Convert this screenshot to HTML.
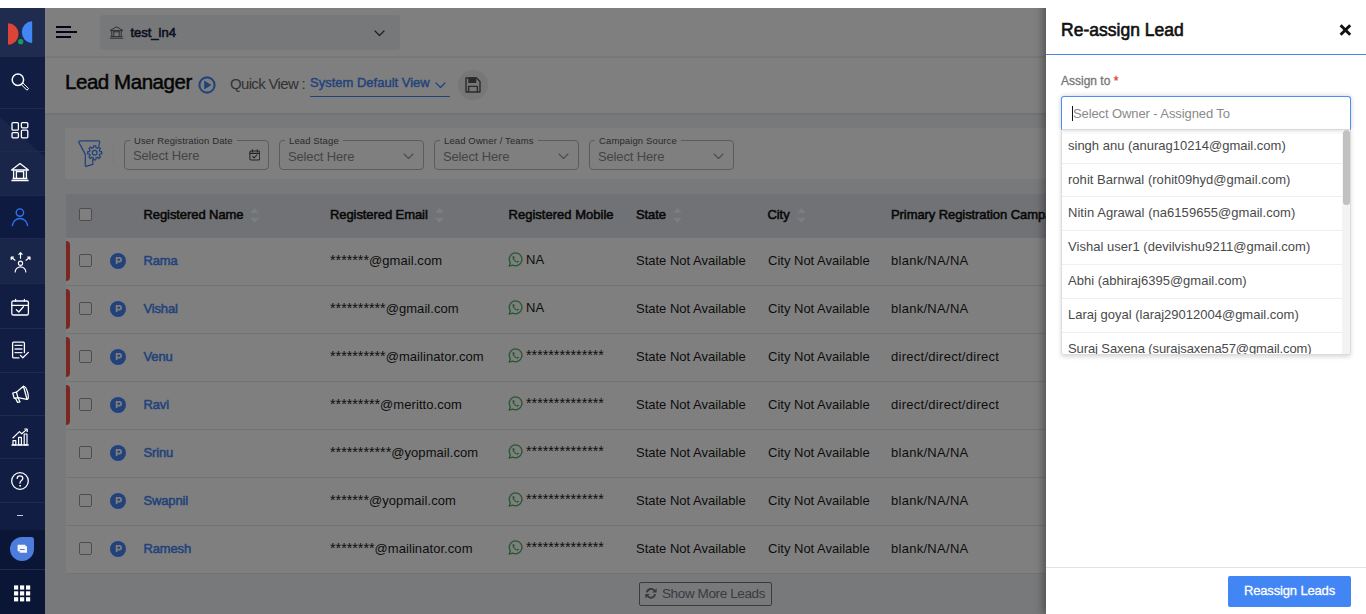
<!DOCTYPE html>
<html>
<head>
<meta charset="utf-8">
<title>Lead Manager</title>
<style>
*{box-sizing:border-box;margin:0;padding:0}
html,body{width:1366px;height:614px;overflow:hidden;background:#fff;font-family:"Liberation Sans",sans-serif;}
body{position:relative}
.abs{position:absolute}
/* ---------- sidebar ---------- */
#side{position:absolute;left:0;top:8px;width:45px;height:606px;background:#111d43;z-index:5;overflow:hidden}
#side .logo{position:absolute;left:0;top:0;width:45px;height:48px;background:#1f2c4f}
#side .sep{position:absolute;left:0;width:45px;height:1px;background:#1e2a50}
#side svg{position:absolute}
#side .act{position:absolute;left:0;top:187px;width:45px;height:43px;background:#0e1a40}
#side .chatbg{position:absolute;left:0;top:522px;width:45px;height:85px;background:#0b1536}
#side .tri{position:absolute;left:0;top:100px;width:45px;height:175px;background:#1a2649;clip-path:polygon(0 9px,45px 49px,45px 175px,0 175px)}
/* ---------- main ---------- */
#main{position:absolute;left:45px;top:8px;width:1321px;height:606px;background:#f1f3f6;overflow:hidden}
#topbar{position:absolute;left:0;top:0;width:1321px;height:49px;background:#fff;border-bottom:1px solid #f1f1f1}
#inst{position:absolute;left:55px;top:7px;width:300px;height:35px;background:#eff1f5;border-radius:3px}
#inst span{position:absolute;left:30.4px;top:10px;font-size:13px;color:#1d2440;-webkit-text-stroke-width:0.6px}
#titlebar{position:absolute;left:0;top:50px;width:1321px;height:54.5px;background:#fff;box-shadow:0 1px 3px rgba(0,0,0,.12)}
#titlebar h1{position:absolute;left:20px;top:11.5px;font-size:20.5px;font-weight:normal;color:#0a0a0a;-webkit-text-stroke:0.5px #0a0a0a;white-space:nowrap;letter-spacing:-0.45px}
#qv{position:absolute;left:185px;top:17px;font-size:15px;color:#666;white-space:nowrap;letter-spacing:-0.67px}
#sdv{position:absolute;left:265px;top:17px;width:140px;height:22px;border-bottom:1px solid #4285f4;font-size:13px;color:#4285f4;white-space:nowrap;-webkit-text-stroke-width:0.4px}
#savebtn{position:absolute;left:413px;top:12px;width:29.5px;height:29.5px;border-radius:50%;background:#eee}
#filters{position:absolute;left:20px;top:120px;width:1290px;height:50.5px;background:#fff}
.fbox{position:absolute;top:12px;height:30px;border:1px solid #b8b8b8;border-radius:4px}
.fbox .lab{position:absolute;left:5px;top:-5.8px;background:#fff;padding:0 4px;font-size:9.5px;color:#555;white-space:nowrap;line-height:12px;letter-spacing:0.12px}
.fbox .v2{top:8.1px !important}
.fbox .val{position:absolute;left:8px;top:7px;font-size:13px;color:#8a8a8a;white-space:nowrap;letter-spacing:-0.15px}
#thead{position:absolute;left:21px;top:186px;width:1290px;height:44px;background:#e3e5ec}
.th{position:absolute;top:13px;font-size:13px;color:#111;white-space:nowrap;letter-spacing:-0.08px;-webkit-text-stroke-width:0.55px}
.row{position:absolute;left:21px;width:1290px;height:48px;background:#fff;border-bottom:1px solid #e6e6e6}
.row .c{position:absolute;top:15.2px;line-height:15px;font-size:13px;color:#1a1a1a;white-space:nowrap}
.row .s{font-size:14.3px;line-height:15px;letter-spacing:0}
.row .em{letter-spacing:0.07px}
.row .cp{letter-spacing:0.28px}
.row .mob{top:14.4px}
.row .nm{color:#4285f4;font-size:13px;letter-spacing:-0.15px;-webkit-text-stroke-width:0.5px}
.row .red{position:absolute;left:0;top:3.3px;width:4px;height:40.2px;background:#f44e3e;border-radius:0 4px 4px 0}
.cb{position:absolute;left:13px;width:13px;height:13px;border:1px solid #9a9a9a;border-radius:2px;background:#fff}
.pb{position:absolute;left:44px;top:15px;width:16px;height:16px;border-radius:50%;background:#4285f4;color:#fff;font-size:9.9px;font-weight:bold;text-align:center;line-height:15.4px;padding-left:0.8px}
#more{position:absolute;left:594px;top:574px;width:133px;height:24px;border:1px solid #777;border-radius:2px}
#more span{position:absolute;left:22px;top:3px;font-size:13.5px;color:#747881;white-space:nowrap;letter-spacing:-0.38px}
#overlay{position:absolute;left:45px;top:8px;width:1321px;height:606px;background:rgba(0,0,0,.5);z-index:3}
#topstrip{position:absolute;left:0;top:0;width:1366px;height:8px;background:#fff;z-index:9}
/* ---------- right panel ---------- */
#panel{position:absolute;left:1046px;top:0;width:320px;height:614px;background:#fff;z-index:8;box-shadow:-3px 0 8px rgba(0,0,0,.35)}
#panel h2{position:absolute;left:15px;top:20px;font-size:17.5px;font-weight:normal;color:#111;-webkit-text-stroke:0.62px #111;white-space:nowrap;letter-spacing:0.02px}
#phr{position:absolute;left:0;top:54px;width:320px;height:1px;background:#4a86e8}
#assign{position:absolute;left:15px;top:74px;font-size:12px;color:#777;white-space:nowrap;-webkit-text-stroke-width:0.3px}
#sel{position:absolute;left:15px;top:96px;width:290px;height:34px;border:1px solid #4d8ef5;border-bottom:1px solid #ddd;border-radius:3px 3px 0 0;box-shadow:0 0 5px rgba(0,0,0,.2)}
#sel i{position:absolute;left:10px;top:9px;width:1px;height:15px;background:#111}
#sel span{position:absolute;left:11px;top:9px;letter-spacing:-0.1px;font-size:13px;color:#8a8a8a;white-space:nowrap}
#dd{position:absolute;left:15px;top:130px;width:290px;height:225px;border:1px solid #ddd;border-top:none;overflow:hidden;box-shadow:0 2px 4px rgba(0,0,0,.15);border-radius:0 0 3px 3px}
#dd .it{position:absolute;left:0;width:280px;height:33.75px;border-bottom:1px solid #efefef;font-size:13px;color:#4a4a4a;padding:7.7px 0 0 6px;white-space:nowrap}
#sbt{position:absolute;left:280px;top:0;width:9px;height:224px;background:#f3f3f3}
#sbth{position:absolute;left:281px;top:0;width:7px;height:75px;background:#c1c1c1;border-radius:4px}
#foot{position:absolute;left:0;top:567px;width:320px;height:1px;background:#e2e2e2}
#btn{position:absolute;left:182px;top:576px;width:123px;height:30.5px;background:#4285f4;color:#fff;border-radius:2px;font-size:13px;text-align:center;line-height:29.5px;letter-spacing:-0.15px;-webkit-text-stroke:0.3px #fff}
</style>
</head>
<body>
<div id="topstrip"></div>

<div id="main">
  <div id="topbar">
    <div class="abs" style="left:11px;top:18px;width:15px;height:2px;background:#050a2e"></div>
    <div class="abs" style="left:11px;top:23px;width:21px;height:2px;background:#050a2e"></div>
    <div class="abs" style="left:11px;top:28px;width:15px;height:2px;background:#050a2e"></div>
    <div id="inst">
      <svg class="abs" style="left:9px;top:11px" width="15" height="13" viewBox="0 0 15 13" fill="none" stroke="#5a5d68" stroke-width="1" stroke-linejoin="round"><path d="M1 4.6 L7.5 0.8 L14 4.6 Z"/><path d="M2.8 5 V10.4 M4.8 5 V10.4 M10.2 5 V10.4 M12.2 5 V10.4 M4.8 5.8 H10.2"/><path d="M1.6 10.6 H13.4 M0.8 12.2 H14.2"/></svg>
      <span>test_in4</span>
      <svg class="abs" style="left:274px;top:15px" width="11" height="7" viewBox="0 0 11 7" fill="none" stroke="#3a3f55" stroke-width="1.3" stroke-linecap="round" stroke-linejoin="round"><path d="M1 1 L5.5 5.5 L10 1"/></svg>
    </div>
  </div>
  <div id="titlebar">
    <h1>Lead Manager</h1>
    <svg class="abs" style="left:152.6px;top:18px" width="18" height="18" viewBox="0 0 18 18"><circle cx="9" cy="9" r="7.6" fill="none" stroke="#4285f4" stroke-width="2.1"/><path d="M6.2 4.6 L13.4 9 L6.2 13.4 Z" fill="#4285f4"/></svg>
    <div id="qv">Quick View :</div>
    <div id="sdv"><span>System Default View</span><svg class="abs" style="left:125px;top:7px" width="11" height="7" viewBox="0 0 11 7" fill="none" stroke="#4285f4" stroke-width="1.3" stroke-linecap="round" stroke-linejoin="round"><path d="M1 1 L5.5 5.5 L10 1"/></svg></div>
    <div id="savebtn"><svg class="abs" style="left:6.5px;top:6.5px" width="16" height="16" viewBox="0 0 16 16" fill="none" stroke="#555" stroke-width="1.4" stroke-linejoin="round"><path d="M1 1 H11.6 L15 4.4 V15 H1 Z"/><path d="M4 1 V5.4 H10.6 V1 Z" fill="#555"/><path d="M3.6 15 V9.4 H12.4 V15"/></svg></div>
  </div>
  <div id="filters">
    <svg class="abs" style="left:12px;top:11px" width="27" height="30" viewBox="0 0 27 30" fill="none" stroke="#4285f4" stroke-width="1.25" stroke-linejoin="round" stroke-linecap="round"><path d="M21.9 6.6 L22.6 3.6 Q23 1.8 21.2 1.8 H3.2 Q1 1.8 2 3.6 L8.3 15.4 V26.2 Q8.3 27.8 9.8 27.2 L15.8 25.4 V20.4"/><path d="M16.44 8.65 L16.57 6.79 L18.83 6.79 L18.96 8.65 L20.45 9.27 L21.86 8.04 L23.46 9.64 L22.23 11.05 L22.85 12.54 L24.71 12.67 L24.71 14.93 L22.85 15.06 L22.23 16.55 L23.46 17.96 L21.86 19.56 L20.45 18.33 L18.96 18.95 L18.83 20.81 L16.57 20.81 L16.44 18.95 L14.95 18.33 L13.54 19.56 L11.94 17.96 L13.17 16.55 L12.55 15.06 L10.69 14.93 L10.69 12.67 L12.55 12.54 L13.17 11.05 L11.94 9.64 L13.54 8.04 L14.95 9.27 Z"/><circle cx="17.7" cy="13.8" r="2.4"/></svg>
    <div class="abs" style="left:48px;top:17px;width:1px;height:20px;background:#f4f4f4"></div>
    <div class="fbox" style="left:59px;width:145px"><div class="lab">User Registration Date</div><div class="val">Select Here</div><svg class="abs" style="left:123.5px;top:8.2px" width="11.6" height="11.8" viewBox="0 0 13 13" fill="none" stroke="#444" stroke-width="1.15" stroke-linejoin="round" stroke-linecap="round"><rect x="1" y="2.2" width="11" height="10" rx="1.4"/><path d="M3.8 0.8 V3 M9.2 0.8 V3 M1 4.8 H12"/><path d="M4.2 8.2 L5.8 9.8 L8.8 6.6"/></svg></div>
    <div class="fbox" style="left:214px;width:145px"><div class="lab">Lead Stage</div><div class="val v2">Select Here</div><svg class="abs" style="left:122.6px;top:12px" width="11" height="7" viewBox="0 0 11 7" fill="none" stroke="#999" stroke-width="1.1" stroke-linecap="round" stroke-linejoin="round"><path d="M1 1 L5.5 5.5 L10 1"/></svg></div>
    <div class="fbox" style="left:369px;width:145px"><div class="lab">Lead Owner / Teams</div><div class="val v2">Select Here</div><svg class="abs" style="left:122.6px;top:12px" width="11" height="7" viewBox="0 0 11 7" fill="none" stroke="#999" stroke-width="1.1" stroke-linecap="round" stroke-linejoin="round"><path d="M1 1 L5.5 5.5 L10 1"/></svg></div>
    <div class="fbox" style="left:524px;width:145px"><div class="lab">Campaign Source</div><div class="val v2">Select Here</div><svg class="abs" style="left:122.6px;top:12px" width="11" height="7" viewBox="0 0 11 7" fill="none" stroke="#999" stroke-width="1.1" stroke-linecap="round" stroke-linejoin="round"><path d="M1 1 L5.5 5.5 L10 1"/></svg></div>
  </div>
  <div id="thead">
    <div class="cb" style="top:14px"></div>
    <div class="th" style="left:77.5px">Registered Name</div>
    <svg class="abs" style="left:184px;top:14px" width="9" height="15" viewBox="0 0 9 15"><path d="M4.5 0 L8.6 4.7 H0.4 Z" fill="#fbfcff"/><path d="M4.5 14.7 L8.6 10 H0.4 Z" fill="#fbfcff"/></svg>
    <div class="th" style="left:264px">Registered Email</div>
    <svg class="abs" style="left:368.5px;top:14px" width="9" height="15" viewBox="0 0 9 15"><path d="M4.5 0 L8.6 4.7 H0.4 Z" fill="#fbfcff"/><path d="M4.5 14.7 L8.6 10 H0.4 Z" fill="#fbfcff"/></svg>
    <div class="th" style="left:442.5px;letter-spacing:0.02px">Registered Mobile</div>
    <div class="th" style="left:570px">State</div>
    <svg class="abs" style="left:606.5px;top:14px" width="9" height="15" viewBox="0 0 9 15"><path d="M4.5 0 L8.6 4.7 H0.4 Z" fill="#fbfcff"/><path d="M4.5 14.7 L8.6 10 H0.4 Z" fill="#fbfcff"/></svg>
    <div class="th" style="left:701.5px">City</div>
    <svg class="abs" style="left:730.5px;top:14px" width="9" height="15" viewBox="0 0 9 15"><path d="M4.5 0 L8.6 4.7 H0.4 Z" fill="#fbfcff"/><path d="M4.5 14.7 L8.6 10 H0.4 Z" fill="#fbfcff"/></svg>
    <div class="th" style="left:825px">Primary Registration Campaign</div>
  </div>
  <div class="row" style="top:229.5px">
    <div class="red"></div>
    <div class="cb" style="top:16.3px"></div><div class="pb"><svg class="abs" style="left:0;top:0" width="16" height="16" viewBox="0 0 16 16" fill="none" stroke="#fff" stroke-width="1.7"><path d="M6.6 11 V4.9 H9.3 A1.85 1.85 0 0 1 9.3 8.6 H6.6"/></svg></div>
    <div class="c nm" style="left:77.5px">Rama</div>
    <div class="c em" style="left:264px"><span class="s">*******</span>@gmail.com</div>
    <svg class="abs" style="left:442px;top:14.7px" width="15.3" height="15.3" viewBox="0 0 15 15"><path d="M7.6 0.9 A6.3 6.3 0 0 0 2.2 10.5 L1.1 13.9 L4.7 12.9 A6.3 6.3 0 1 0 7.6 0.9 Z" fill="none" stroke="#43b257" stroke-width="1.25" stroke-linejoin="round"/><path d="M5.3 4 C4.9 4 4.4 4.6 4.4 5.4 C4.4 7.4 7.2 10.2 9.2 10.3 C10 10.3 10.7 9.8 10.7 9.3 L9.3 8.5 L8.6 9.2 C7.6 8.8 6.3 7.5 5.9 6.6 L6.5 5.9 L5.9 4.2 Z" fill="#43b257"/></svg>
    <div class="c mob" style="left:460px">NA</div>
    <div class="c" style="left:570px">State Not Available</div>
    <div class="c" style="left:702px">City Not Available</div>
    <div class="c cp" style="left:825px">blank/NA/NA</div>
  </div>
  <div class="row" style="top:277.5px">
    <div class="red"></div>
    <div class="cb" style="top:16.3px"></div><div class="pb"><svg class="abs" style="left:0;top:0" width="16" height="16" viewBox="0 0 16 16" fill="none" stroke="#fff" stroke-width="1.7"><path d="M6.6 11 V4.9 H9.3 A1.85 1.85 0 0 1 9.3 8.6 H6.6"/></svg></div>
    <div class="c nm" style="left:77.5px">Vishal</div>
    <div class="c em" style="left:264px"><span class="s">**********</span>@gmail.com</div>
    <svg class="abs" style="left:442px;top:14.7px" width="15.3" height="15.3" viewBox="0 0 15 15"><path d="M7.6 0.9 A6.3 6.3 0 0 0 2.2 10.5 L1.1 13.9 L4.7 12.9 A6.3 6.3 0 1 0 7.6 0.9 Z" fill="none" stroke="#43b257" stroke-width="1.25" stroke-linejoin="round"/><path d="M5.3 4 C4.9 4 4.4 4.6 4.4 5.4 C4.4 7.4 7.2 10.2 9.2 10.3 C10 10.3 10.7 9.8 10.7 9.3 L9.3 8.5 L8.6 9.2 C7.6 8.8 6.3 7.5 5.9 6.6 L6.5 5.9 L5.9 4.2 Z" fill="#43b257"/></svg>
    <div class="c mob" style="left:460px">NA</div>
    <div class="c" style="left:570px">State Not Available</div>
    <div class="c" style="left:702px">City Not Available</div>
    <div class="c cp" style="left:825px">blank/NA/NA</div>
  </div>
  <div class="row" style="top:325.5px">
    <div class="red"></div>
    <div class="cb" style="top:16.3px"></div><div class="pb"><svg class="abs" style="left:0;top:0" width="16" height="16" viewBox="0 0 16 16" fill="none" stroke="#fff" stroke-width="1.7"><path d="M6.6 11 V4.9 H9.3 A1.85 1.85 0 0 1 9.3 8.6 H6.6"/></svg></div>
    <div class="c nm" style="left:77.5px">Venu</div>
    <div class="c em" style="left:264px"><span class="s">**********</span>@mailinator.com</div>
    <svg class="abs" style="left:442px;top:14.7px" width="15.3" height="15.3" viewBox="0 0 15 15"><path d="M7.6 0.9 A6.3 6.3 0 0 0 2.2 10.5 L1.1 13.9 L4.7 12.9 A6.3 6.3 0 1 0 7.6 0.9 Z" fill="none" stroke="#43b257" stroke-width="1.25" stroke-linejoin="round"/><path d="M5.3 4 C4.9 4 4.4 4.6 4.4 5.4 C4.4 7.4 7.2 10.2 9.2 10.3 C10 10.3 10.7 9.8 10.7 9.3 L9.3 8.5 L8.6 9.2 C7.6 8.8 6.3 7.5 5.9 6.6 L6.5 5.9 L5.9 4.2 Z" fill="#43b257"/></svg>
    <div class="c mob st" style="left:460px"><span class="s">**************</span></div>
    <div class="c" style="left:570px">State Not Available</div>
    <div class="c" style="left:702px">City Not Available</div>
    <div class="c cp" style="left:825px">direct/direct/direct</div>
  </div>
  <div class="row" style="top:373.5px">
    <div class="red"></div>
    <div class="cb" style="top:16.3px"></div><div class="pb"><svg class="abs" style="left:0;top:0" width="16" height="16" viewBox="0 0 16 16" fill="none" stroke="#fff" stroke-width="1.7"><path d="M6.6 11 V4.9 H9.3 A1.85 1.85 0 0 1 9.3 8.6 H6.6"/></svg></div>
    <div class="c nm" style="left:77.5px">Ravi</div>
    <div class="c em" style="left:264px"><span class="s">*********</span>@meritto.com</div>
    <svg class="abs" style="left:442px;top:14.7px" width="15.3" height="15.3" viewBox="0 0 15 15"><path d="M7.6 0.9 A6.3 6.3 0 0 0 2.2 10.5 L1.1 13.9 L4.7 12.9 A6.3 6.3 0 1 0 7.6 0.9 Z" fill="none" stroke="#43b257" stroke-width="1.25" stroke-linejoin="round"/><path d="M5.3 4 C4.9 4 4.4 4.6 4.4 5.4 C4.4 7.4 7.2 10.2 9.2 10.3 C10 10.3 10.7 9.8 10.7 9.3 L9.3 8.5 L8.6 9.2 C7.6 8.8 6.3 7.5 5.9 6.6 L6.5 5.9 L5.9 4.2 Z" fill="#43b257"/></svg>
    <div class="c mob st" style="left:460px"><span class="s">**************</span></div>
    <div class="c" style="left:570px">State Not Available</div>
    <div class="c" style="left:702px">City Not Available</div>
    <div class="c cp" style="left:825px">direct/direct/direct</div>
  </div>
  <div class="row" style="top:421.5px">
    <div class="cb" style="top:16.3px"></div><div class="pb"><svg class="abs" style="left:0;top:0" width="16" height="16" viewBox="0 0 16 16" fill="none" stroke="#fff" stroke-width="1.7"><path d="M6.6 11 V4.9 H9.3 A1.85 1.85 0 0 1 9.3 8.6 H6.6"/></svg></div>
    <div class="c nm" style="left:77.5px">Srinu</div>
    <div class="c em" style="left:264px"><span class="s">***********</span>@yopmail.com</div>
    <svg class="abs" style="left:442px;top:14.7px" width="15.3" height="15.3" viewBox="0 0 15 15"><path d="M7.6 0.9 A6.3 6.3 0 0 0 2.2 10.5 L1.1 13.9 L4.7 12.9 A6.3 6.3 0 1 0 7.6 0.9 Z" fill="none" stroke="#43b257" stroke-width="1.25" stroke-linejoin="round"/><path d="M5.3 4 C4.9 4 4.4 4.6 4.4 5.4 C4.4 7.4 7.2 10.2 9.2 10.3 C10 10.3 10.7 9.8 10.7 9.3 L9.3 8.5 L8.6 9.2 C7.6 8.8 6.3 7.5 5.9 6.6 L6.5 5.9 L5.9 4.2 Z" fill="#43b257"/></svg>
    <div class="c mob st" style="left:460px"><span class="s">**************</span></div>
    <div class="c" style="left:570px">State Not Available</div>
    <div class="c" style="left:702px">City Not Available</div>
    <div class="c cp" style="left:825px">blank/NA/NA</div>
  </div>
  <div class="row" style="top:469.5px">
    <div class="cb" style="top:16.3px"></div><div class="pb"><svg class="abs" style="left:0;top:0" width="16" height="16" viewBox="0 0 16 16" fill="none" stroke="#fff" stroke-width="1.7"><path d="M6.6 11 V4.9 H9.3 A1.85 1.85 0 0 1 9.3 8.6 H6.6"/></svg></div>
    <div class="c nm" style="left:77.5px">Swapnil</div>
    <div class="c em" style="left:264px"><span class="s">*******</span>@yopmail.com</div>
    <svg class="abs" style="left:442px;top:14.7px" width="15.3" height="15.3" viewBox="0 0 15 15"><path d="M7.6 0.9 A6.3 6.3 0 0 0 2.2 10.5 L1.1 13.9 L4.7 12.9 A6.3 6.3 0 1 0 7.6 0.9 Z" fill="none" stroke="#43b257" stroke-width="1.25" stroke-linejoin="round"/><path d="M5.3 4 C4.9 4 4.4 4.6 4.4 5.4 C4.4 7.4 7.2 10.2 9.2 10.3 C10 10.3 10.7 9.8 10.7 9.3 L9.3 8.5 L8.6 9.2 C7.6 8.8 6.3 7.5 5.9 6.6 L6.5 5.9 L5.9 4.2 Z" fill="#43b257"/></svg>
    <div class="c mob st" style="left:460px"><span class="s">**************</span></div>
    <div class="c" style="left:570px">State Not Available</div>
    <div class="c" style="left:702px">City Not Available</div>
    <div class="c cp" style="left:825px">blank/NA/NA</div>
  </div>
  <div class="row" style="top:517.5px">
    <div class="cb" style="top:16.3px"></div><div class="pb"><svg class="abs" style="left:0;top:0" width="16" height="16" viewBox="0 0 16 16" fill="none" stroke="#fff" stroke-width="1.7"><path d="M6.6 11 V4.9 H9.3 A1.85 1.85 0 0 1 9.3 8.6 H6.6"/></svg></div>
    <div class="c nm" style="left:77.5px">Ramesh</div>
    <div class="c em" style="left:264px"><span class="s">********</span>@mailinator.com</div>
    <svg class="abs" style="left:442px;top:14.7px" width="15.3" height="15.3" viewBox="0 0 15 15"><path d="M7.6 0.9 A6.3 6.3 0 0 0 2.2 10.5 L1.1 13.9 L4.7 12.9 A6.3 6.3 0 1 0 7.6 0.9 Z" fill="none" stroke="#43b257" stroke-width="1.25" stroke-linejoin="round"/><path d="M5.3 4 C4.9 4 4.4 4.6 4.4 5.4 C4.4 7.4 7.2 10.2 9.2 10.3 C10 10.3 10.7 9.8 10.7 9.3 L9.3 8.5 L8.6 9.2 C7.6 8.8 6.3 7.5 5.9 6.6 L6.5 5.9 L5.9 4.2 Z" fill="#43b257"/></svg>
    <div class="c mob st" style="left:460px"><span class="s">**************</span></div>
    <div class="c" style="left:570px">State Not Available</div>
    <div class="c" style="left:702px">City Not Available</div>
    <div class="c cp" style="left:825px">blank/NA/NA</div>
  </div>
  <div id="more"><svg class="abs" style="left:5px;top:5px" width="12" height="11" viewBox="0 0 12 11" fill="none" stroke="#6e737c" stroke-width="1.9"><path d="M1.9 4.4 A4.2 4.2 0 0 1 9.4 2.6"/><path d="M10.1 6.2 A4.2 4.2 0 0 1 2.6 8"/><path d="M11.6 0.2 V4.6 H7.2 Z" fill="#6e737c" stroke="none"/><path d="M0.4 10.4 V6 H4.8 Z" fill="#6e737c" stroke="none"/></svg><span>Show More Leads</span></div>
</div>

<div id="overlay"></div>

<div id="side">
  <div class="tri"></div>
  <div class="logo"></div>
  <div class="act"></div>
  <div class="chatbg"></div>
  <div class="sep" style="top:48px"></div>
  <div class="sep" style="top:100px"></div>
  <div class="sep" style="top:143px"></div>
  <div class="sep" style="top:187px"></div>
  <div class="sep" style="top:230px"></div>
  <div class="sep" style="top:275px"></div>
  <div class="sep" style="top:320px"></div>
  <div class="sep" style="top:364px"></div>
  <div class="sep" style="top:407px"></div>
  <div class="sep" style="top:450px"></div>
  <div class="sep" style="top:494px"></div>
  <div class="sep" style="top:561px"></div>
  <!-- logo -->
  <svg style="left:0;top:0" width="45" height="48" viewBox="0 0 45 48">
    <path d="M8 16 Q8 15.2 8.8 15.25 A10.8 10.8 0 0 1 8.8 36.75 Q8 36.8 8 36 Z" fill="#dc4437"/>
    <path d="M32.2 14 Q32.2 13.2 31.4 13.25 A10.6 10.9 0 0 0 31.4 34.95 Q32.2 35 32.2 34.2 Z" fill="#4285f4"/>
    <circle cx="20.7" cy="33.7" r="2.6" fill="#10a05a"/>
  </svg>
  <!-- search -->
  <svg style="left:0;top:48px" width="45" height="52" viewBox="0 0 45 52" fill="none" stroke="#fff" stroke-width="1.5">
    <circle cx="17.9" cy="23.8" r="5.7"/>
    <path d="M21.3 28.6 L22.9 27 L28.5 32.6 L26.9 34.2 Z" stroke-width="1" stroke-linejoin="round"/>
  </svg>
  <!-- dashboard -->
  <svg style="left:0;top:100px" width="45" height="44" viewBox="0 0 45 44" fill="none" stroke="#fff" stroke-width="1.3">
    <rect x="12" y="14.6" width="6.4" height="7.6" rx="1"/>
    <rect x="21.4" y="14.6" width="6.4" height="5.2" rx="1"/>
    <rect x="12" y="24.6" width="6.4" height="5.2" rx="1"/>
    <rect x="21.4" y="22.2" width="6.4" height="7.6" rx="1"/>
  </svg>
  <!-- institution -->
  <svg style="left:0;top:143px" width="45" height="44" viewBox="0 0 45 44" fill="none" stroke="#fff" stroke-width="1.3" stroke-linejoin="round">
    <path d="M11.6 19 L20 12.6 L28.4 19 Z"/>
    <path d="M13.6 19.6 V27.4 M16.4 19.6 V27.4 M23.6 19.6 V27.4 M26.4 19.6 V27.4"/>
    <path d="M16.4 20.6 H23.6"/>
    <path d="M12.6 27.6 H27.4 M11.4 29.6 H28.6" stroke-width="1.5"/>
  </svg>
  <!-- user (active) -->
  <svg style="left:0;top:187px" width="45" height="44" viewBox="0 0 45 44" fill="none" stroke="#2f72f5" stroke-width="1.4" stroke-linecap="round">
    <circle cx="19.9" cy="17.6" r="3.7"/>
    <path d="M12.3 30.6 A7.7 8 0 0 1 27.6 30.6"/>
  </svg>
  <!-- distribute -->
  <svg style="left:0;top:230px" width="45" height="45" viewBox="0 0 45 45" fill="none" stroke="#fff" stroke-width="1.15" stroke-linecap="round" stroke-linejoin="round">
    <circle cx="20.5" cy="25.2" r="2.1"/>
    <path d="M15.2 34 A5.3 5.2 0 0 1 25.8 34"/>
    <path d="M20.5 20.2 V14.8 M18.9 16.3 L20.5 14.6 L22.1 16.3"/>
    <path d="M15 22.2 L11.4 19.2 M11.2 21.4 V19 H13.6"/>
    <path d="M26 22.2 L29.8 19.2 M27.6 19 H30 V21.4"/>
  </svg>
  <!-- calendar -->
  <svg style="left:0;top:275px" width="45" height="45" viewBox="0 0 45 45" fill="none" stroke="#fff" stroke-width="1.3" stroke-linecap="round" stroke-linejoin="round">
    <rect x="11.8" y="18" width="16.6" height="14" rx="1.6"/>
    <path d="M11.8 22.3 H28.4 M15.6 16.4 V18 M24.4 16.4 V18"/>
    <path d="M16.4 26.8 L18.8 29 L23.4 23.8"/>
  </svg>
  <!-- document -->
  <svg style="left:0;top:320px" width="45" height="44" viewBox="0 0 45 44" fill="none" stroke="#fff" stroke-width="1.3" stroke-linecap="round" stroke-linejoin="round">
    <path d="M19 29.8 H13.6 Q12.6 29.8 12.6 28.8 V15.2 Q12.6 14.2 13.6 14.2 H23.4 Q24.4 14.2 24.4 15.2 V24.6"/>
    <path d="M15 17.4 H22 M15 21 H22 M15 24.6 H22" stroke="#e8e8ee"/>
    <path d="M20.4 27.4 L22.8 29.8 L28.4 24.4"/>
  </svg>
  <!-- megaphone -->
  <svg style="left:0;top:364px" width="45" height="43" viewBox="0 0 45 43" fill="none" stroke="#fff" stroke-width="1.5" stroke-linecap="round" stroke-linejoin="round">
    <g transform="translate(19.7 22.2) scale(0.87,0.8) rotate(-14) translate(-20 -22)">
      <path d="M12.6 18.6 H17 L26.6 13.4 V30.4 L17 25.6 H12.6 Z"/>
      <path d="M17 18.6 V25.6"/>
      <path d="M14 25.8 L15.2 31.4 H18 L17.2 25.8"/>
      <path d="M26.6 13.4 Q29.4 14 29.4 22 Q29.4 30 26.6 30.4"/>
    </g>
  </svg>
  <!-- chart -->
  <svg style="left:0;top:407px" width="45" height="43" viewBox="0 0 45 43" fill="none" stroke="#fff" stroke-width="1.2" stroke-linejoin="round">
    <path d="M11.4 30 H28.8" stroke-width="1.4"/>
    <rect x="13" y="25.6" width="2.8" height="4.2"/>
    <rect x="18.6" y="22.4" width="2.8" height="7.4"/>
    <rect x="24.2" y="19" width="2.8" height="10.8"/>
    <path d="M12.6 23.2 L19.4 16.6 L21.8 18.8 L26.8 14.4"/>
    <path d="M24.2 14 H27.2 V17"/>
  </svg>
  <!-- help -->
  <svg style="left:0;top:450px" width="45" height="44" viewBox="0 0 45 44" fill="none" stroke="#fff" stroke-width="1.3" stroke-linecap="round">
    <circle cx="20" cy="23" r="8.3"/>
    <path d="M17.2 20.4 Q17.2 17.8 20 17.8 Q22.8 17.8 22.8 20.3 Q22.8 21.8 21.2 22.8 Q20 23.6 20 25.2"/>
    <circle cx="20" cy="27.8" r="0.5" fill="#fff" stroke-width="0.8"/>
  </svg>
  <!-- dash -->
  <div style="position:absolute;left:17px;top:507px;width:6px;height:1px;background:#c8ccd8"></div>
  <!-- chat -->
  <div style="position:absolute;left:10px;top:529px;width:24.2px;height:24.2px;background:#4d7ddc;border-radius:12.1px 2.5px 12.1px 12.1px"></div>
  <svg style="left:10px;top:529px" width="24" height="24" viewBox="0 0 24 24">
    <path d="M7.6 7.8 H15.4 V8.8 L17 9.6 V15.8 H9.6 V13.9 L8.3 14.7 V13.9 H7.6 Z" fill="#f6f5fa"/>
    <path d="M9.9 12.5 H14.7" stroke="#4d7ddc" stroke-width="1"/>
  </svg>
  <!-- grid -->
  <svg style="left:0;top:561px" width="45" height="45" viewBox="0 0 45 45" fill="#fff">
    <rect x="14" y="16.4" width="4.2" height="4.2"/><rect x="20" y="16.4" width="4.2" height="4.2"/><rect x="26" y="16.4" width="4.2" height="4.2"/>
    <rect x="14" y="22.3" width="4.2" height="4.2"/><rect x="20" y="22.3" width="4.2" height="4.2"/><rect x="26" y="22.3" width="4.2" height="4.2"/>
    <rect x="14" y="28.2" width="4.2" height="4.2"/><rect x="20" y="28.2" width="4.2" height="4.2"/><rect x="26" y="28.2" width="4.2" height="4.2"/>
  </svg>
</div>

<div id="panel">
  <div class="abs" style="left:0;top:7px;width:320px;height:1px;background:#e4e4e4"></div>
  <h2>Re-assign Lead</h2>
  <svg class="abs" style="left:293px;top:24px" width="13" height="12" viewBox="0 0 13 12"><path d="M1.6 1.2 L11.2 10.8 M11.2 1.2 L1.6 10.8" stroke="#111" stroke-width="2.9"/></svg>
  <div id="phr"></div>
  <div id="assign">Assign to <span style="color:#e53935">*</span></div>
  <div id="sel"><i></i><span>Select Owner - Assigned To</span></div>
  <div id="dd">
    <div class="it" style="top:0px;height:34px">singh anu (anurag10214@gmail.com)</div>
    <div class="it" style="top:34px;height:33px;letter-spacing:0.03px">rohit Barnwal (rohit09hyd@gmail.com)</div>
    <div class="it" style="top:67px;height:34px;letter-spacing:0.047px">Nitin Agrawal (na6159655@gmail.com)</div>
    <div class="it" style="top:101px;height:34px;letter-spacing:0.033px">Vishal user1 (devilvishu9211@gmail.com)</div>
    <div class="it" style="top:135px;height:34px">Abhi (abhiraj6395@gmail.com)</div>
    <div class="it" style="top:169px;height:34px">Laraj goyal (laraj29012004@gmail.com)</div>
    <div class="it" style="top:203px;height:34px;letter-spacing:-0.1px">Suraj Saxena (surajsaxena57@gmail.com)</div>
    <div id="sbt"></div><div id="sbth"></div>
  </div>
  <div id="foot"></div>
  <div id="btn">Reassign Leads</div>
</div>
</body>
</html>
